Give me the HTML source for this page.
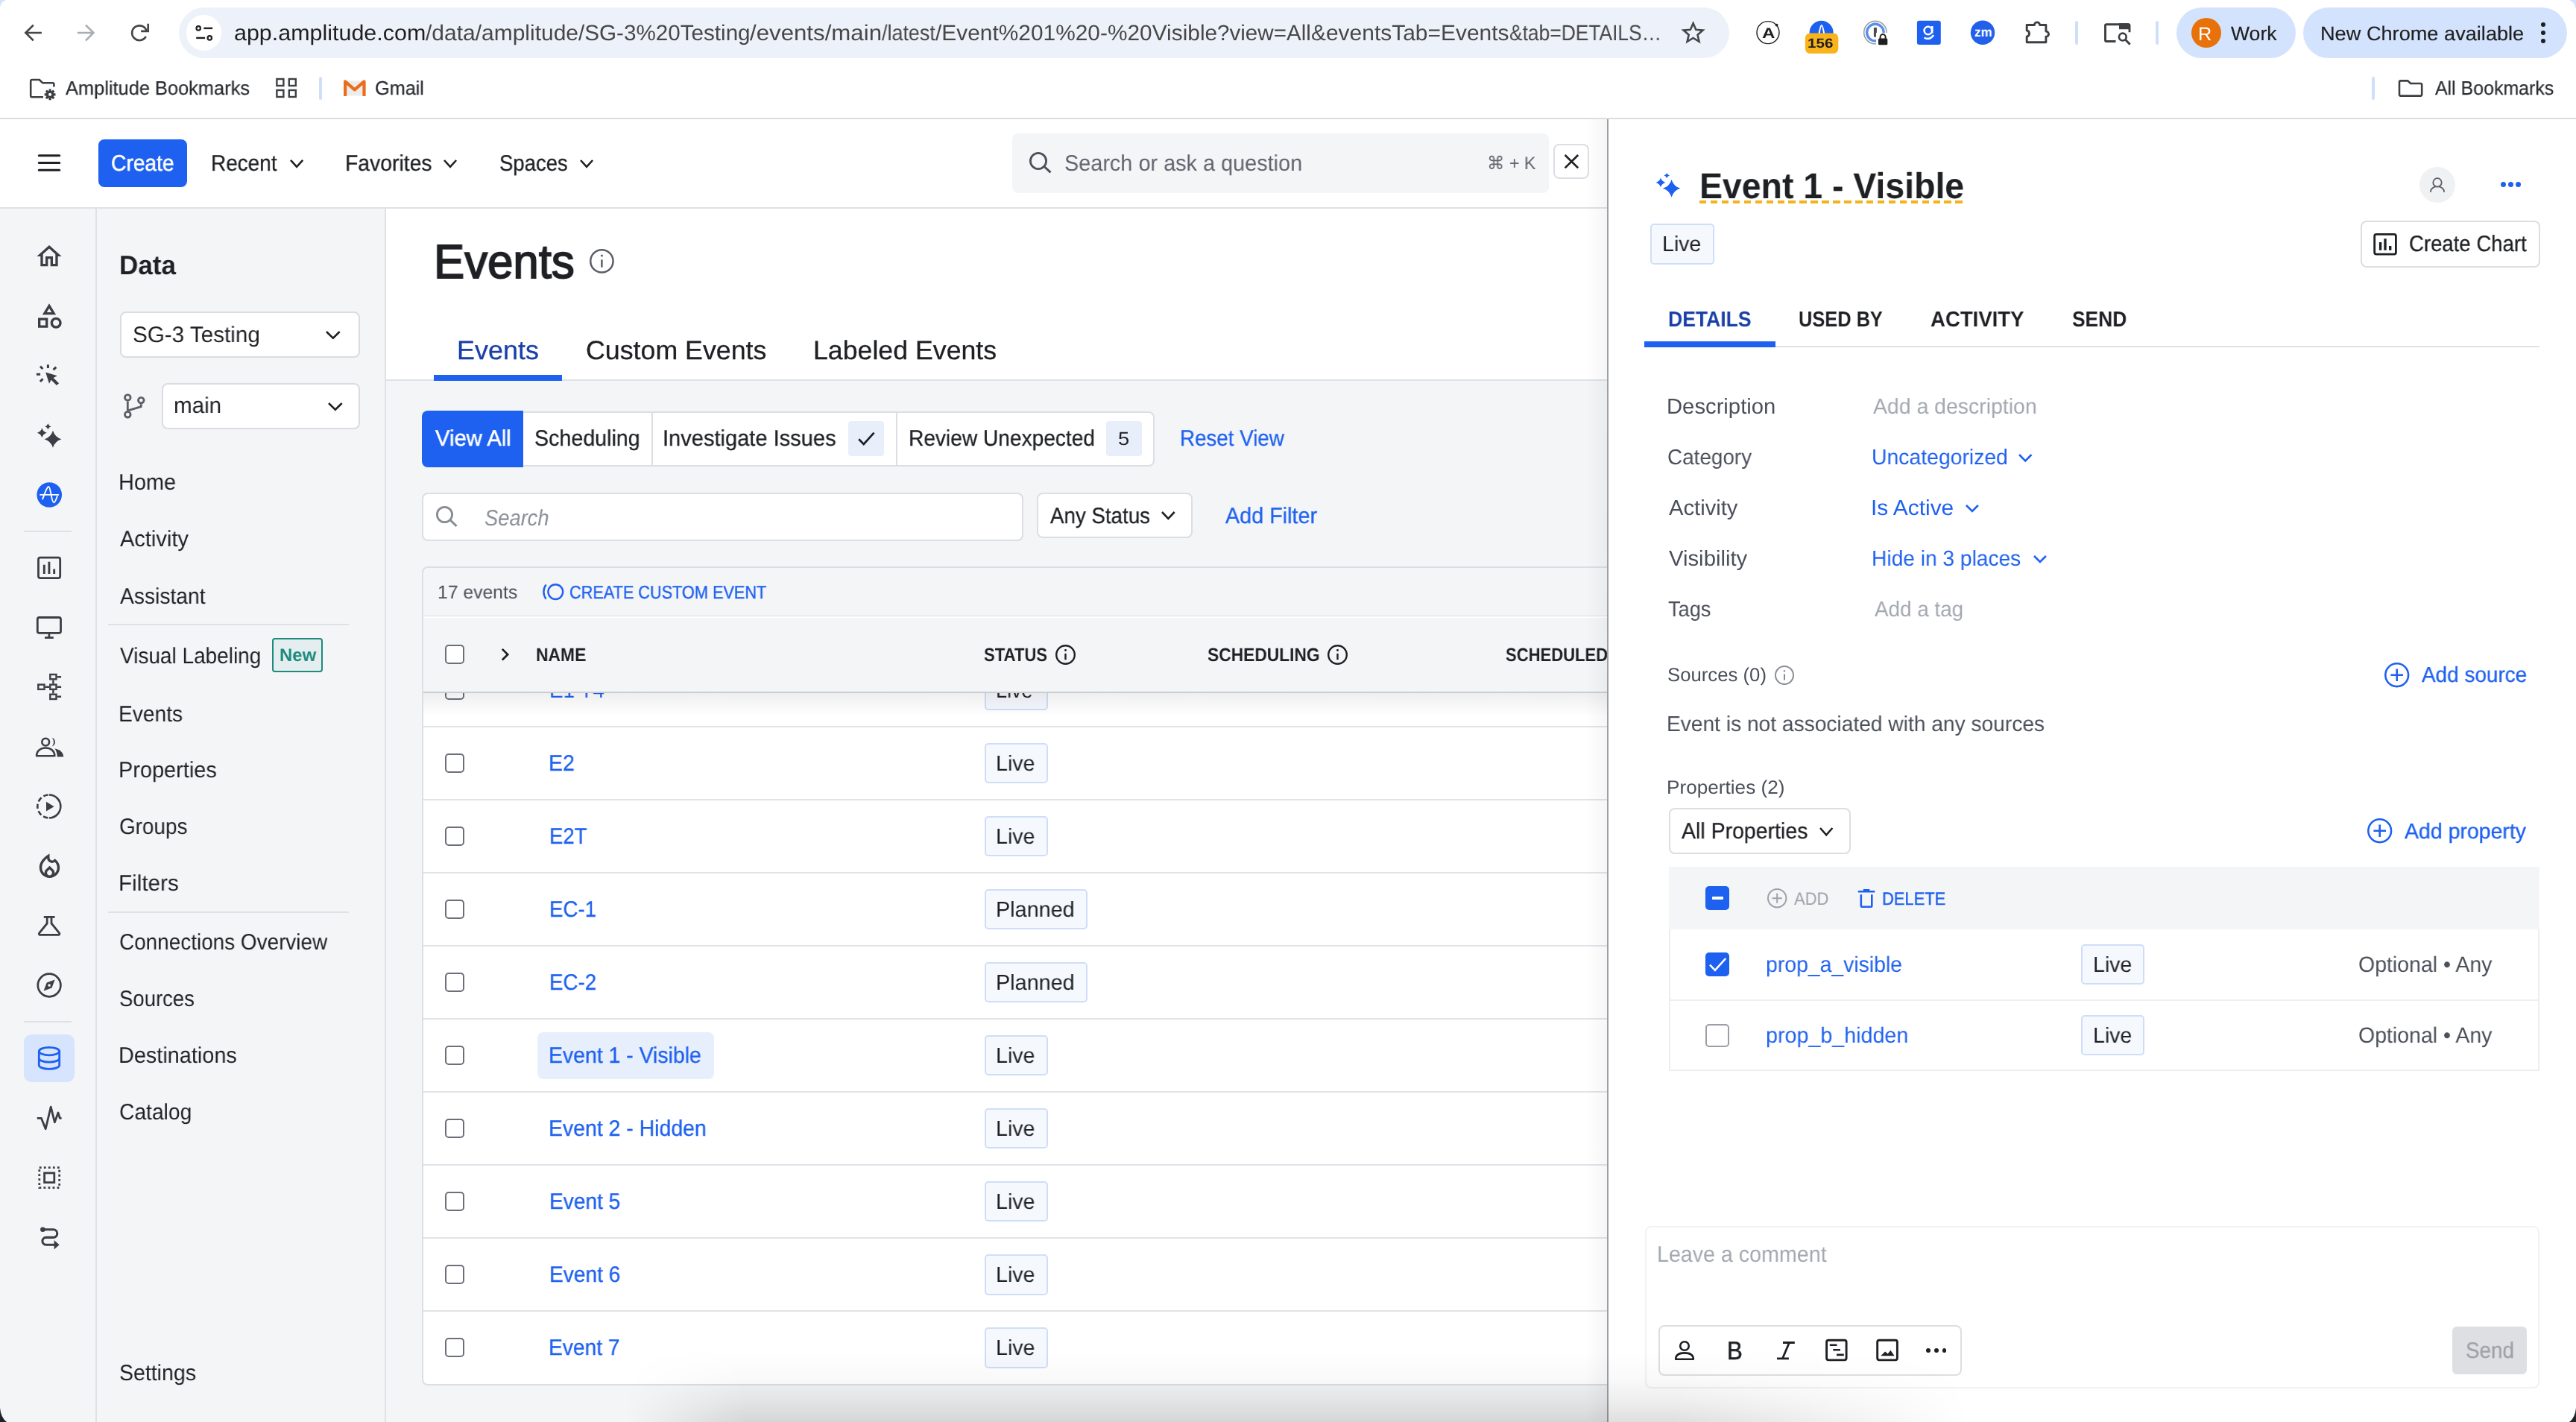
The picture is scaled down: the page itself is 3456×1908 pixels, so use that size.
<!DOCTYPE html>
<html lang="en"><head><meta charset="utf-8"><title>Event 1 - Visible</title>
<style>
html,body{margin:0;padding:0;}
body{width:3456px;height:1908px;position:relative;overflow:hidden;background:#fff;font-family:"Liberation Sans",sans-serif;text-rendering:geometricPrecision;-webkit-font-smoothing:antialiased;}
.b{position:absolute;box-sizing:border-box;display:block;}
.t{position:absolute;white-space:nowrap;transform-origin:0 0;display:block;will-change:transform;}
</style></head><body>
<div id="backgrounds">
<div class="b" style="left:0px;top:0px;width:3456px;height:158px;background:#ffffff;"></div>
<div class="b" style="left:0px;top:158px;width:3456px;height:2px;background:#dcdde1;"></div>
<div class="b" style="left:0px;top:160px;width:2156px;height:118px;background:#ffffff;"></div>
<div class="b" style="left:0px;top:278px;width:2156px;height:2px;background:#dfe1e6;"></div>
<div class="b" style="left:0px;top:280px;width:128px;height:1628px;background:#f4f5f7;"></div>
<div class="b" style="left:128px;top:280px;width:2px;height:1628px;background:#dfe1e6;"></div>
<div class="b" style="left:130px;top:280px;width:386px;height:1628px;background:#f4f5f7;"></div>
<div class="b" style="left:516px;top:280px;width:2px;height:1628px;background:#dfe1e6;"></div>
<div class="b" style="left:518px;top:280px;width:1638px;height:229px;background:#ffffff;"></div>
<div class="b" style="left:518px;top:509px;width:1638px;height:2px;background:#dfe1e6;"></div>
<div class="b" style="left:518px;top:511px;width:1638px;height:1397px;background:#f4f5f7;"></div>
</div><div id="browser-toolbar">
<div class="b" style="left:240px;top:10px;width:2080px;height:68px;background:#edf2fa;border-radius:34px;"></div>
<div class="b" style="left:249.8px;top:20px;width:47.6px;height:47.6px;background:#ffffff;border-radius:24px;"></div>
<span class="t" style="left:313.72px;top:28px;font-size:29.5px;line-height:33px;color:#1f1f1f;transform:scaleX(1.0321);">app.amplitude.com</span>
<span class="t" style="left:570.60px;top:28px;font-size:29.5px;line-height:33px;color:#474747;transform:scaleX(1.0163);">/data/amplitude</span>
<span class="t" style="left:775.60px;top:28px;font-size:29.5px;line-height:33px;color:#474747;transform:scaleX(1.0045);">/SG-3%20Testing</span>
<span class="t" style="left:1006.20px;top:28px;font-size:29.5px;line-height:33px;color:#474747;transform:scaleX(1.0583);">/events/main</span>
<span class="t" style="left:1183.20px;top:28px;font-size:29.5px;line-height:33px;color:#474747;transform:scaleX(0.9123);">/latest</span>
<span class="t" style="left:1255.00px;top:28px;font-size:29.5px;line-height:33px;color:#474747;transform:scaleX(1.0130);">/Event%201%20-%20Visible</span>
<span class="t" style="left:1633.20px;top:28px;font-size:29.5px;line-height:33px;color:#474747;transform:scaleX(1.0029);">?view=All</span>
<span class="t" style="left:1759.00px;top:28px;font-size:29.5px;line-height:33px;color:#474747;transform:scaleX(1.0150);">&amp;eventsTab=Events</span>
<span class="t" style="left:2024.50px;top:28px;font-size:29.5px;line-height:33px;color:#474747;transform:scaleX(0.8940);">&amp;tab=DETAILS…</span>
<div class="b" style="left:2920px;top:10px;width:160px;height:68px;background:#d3e3fd;border-radius:34px;"></div>
<div class="b" style="left:2939.5px;top:24px;width:40px;height:40px;background:#e8710a;border-radius:20px;"></div>
<span class="t" style="left:2949.43px;top:32px;font-size:25px;line-height:28px;color:#ffffff;transform:scaleX(1.0101);">R</span>
<span class="t" style="left:2992.89px;top:30px;font-size:26.5px;line-height:30px;color:#1f1f1f;-webkit-text-stroke:0.2px #1f1f1f;transform:scaleX(1.0034);">Work</span>
<div class="b" style="left:3090px;top:10px;width:354px;height:68px;background:#d3e3fd;border-radius:34px;"></div>
<span class="t" style="left:3113.17px;top:30px;font-size:26.5px;line-height:30px;color:#1f1f1f;-webkit-text-stroke:0.2px #1f1f1f;transform:scaleX(1.0249);">New Chrome available</span>
<div class="b" style="left:3409px;top:29.9px;width:6px;height:6px;background:#1f1f1f;border-radius:3px;"></div>
<div class="b" style="left:3409px;top:41.05px;width:6px;height:6px;background:#1f1f1f;border-radius:3px;"></div>
<div class="b" style="left:3409px;top:52.2px;width:6px;height:6px;background:#1f1f1f;border-radius:3px;"></div>
<div class="b" style="left:2783.6px;top:28px;width:4px;height:32px;background:#d0dff8;border-radius:2px;"></div>
<div class="b" style="left:2891.8px;top:28px;width:4px;height:32px;background:#d0dff8;border-radius:2px;"></div>
<span class="t" style="left:88.45px;top:103px;font-size:26px;line-height:30px;color:#2b2e33;-webkit-text-stroke:0.25px #2b2e33;transform:scaleX(0.9766);">Amplitude Bookmarks</span>
<div class="b" style="left:427.8px;top:102.5px;width:4px;height:31.5px;background:#d0dff8;border-radius:2px;"></div>
<span class="t" style="left:503.24px;top:103px;font-size:26px;line-height:30px;color:#2b2e33;-webkit-text-stroke:0.25px #2b2e33;transform:scaleX(0.9712);">Gmail</span>
<div class="b" style="left:3182px;top:102.5px;width:4px;height:31.5px;background:#d0dff8;border-radius:2px;"></div>
<span class="t" style="left:3266.95px;top:103px;font-size:26px;line-height:30px;color:#2b2e33;-webkit-text-stroke:0.25px #2b2e33;transform:scaleX(0.9578);">All Bookmarks</span>
</div><header id="app-header">
<div class="b" style="left:132px;top:187px;width:119px;height:64px;background:#1e61f0;border-radius:8px;"></div>
<span class="t" style="left:148.59px;top:203px;font-size:30px;line-height:33px;color:#ffffff;-webkit-text-stroke:0.5px #ffffff;transform:scaleX(0.9403);">Create</span>
<span class="t" style="left:283.31px;top:203px;font-size:30px;line-height:33px;color:#1e2024;-webkit-text-stroke:0.3px #1e2024;transform:scaleX(0.9318);">Recent</span>
<span class="t" style="left:463.08px;top:203px;font-size:30px;line-height:33px;color:#1e2024;-webkit-text-stroke:0.3px #1e2024;transform:scaleX(0.9448);">Favorites</span>
<span class="t" style="left:670.06px;top:203px;font-size:30px;line-height:33px;color:#1e2024;-webkit-text-stroke:0.3px #1e2024;transform:scaleX(0.9158);">Spaces</span>
<div class="b" style="left:1358.2px;top:179px;width:719.8px;height:80px;background:#f4f5f7;border-radius:8px;"></div>
<span class="t" style="left:1427.70px;top:203px;font-size:30px;line-height:33px;color:#5f636d;transform:scaleX(0.9617);">Search or ask a question</span>
<span class="t" style="left:1994.97px;top:206px;font-size:24px;line-height:27px;color:#5f636d;transform:scaleX(0.9727);">⌘ + K</span>
<div class="b" style="left:2084px;top:192.5px;width:47.5px;height:47.5px;background:#ffffff;border:2px solid #dcdee3;border-radius:8px;"></div>
</header><nav id="data-sidebar">
<span class="t" style="left:159.59px;top:335px;font-size:36px;line-height:41px;color:#1e2024;font-weight:700;transform:scaleX(0.9738);">Data</span>
<div class="b" style="left:161px;top:417.7px;width:322.3px;height:62.6px;background:#ffffff;border:2px solid #dadce1;border-radius:8px;"></div>
<span class="t" style="left:177.77px;top:433px;font-size:30px;line-height:33px;color:#1e2024;transform:scaleX(0.9883);">SG-3 Testing</span>
<div class="b" style="left:217.2px;top:513.7px;width:266.1px;height:62.2px;background:#ffffff;border:2px solid #dadce1;border-radius:8px;"></div>
<span class="t" style="left:233.05px;top:528px;font-size:30px;line-height:33px;color:#1e2024;transform:scaleX(0.9867);">main</span>
<span class="t" style="left:158.93px;top:631px;font-size:30px;line-height:33px;color:#1e2024;transform:scaleX(0.9642);">Home</span>
<span class="t" style="left:161.24px;top:707px;font-size:30px;line-height:33px;color:#1e2024;transform:scaleX(0.9674);">Activity</span>
<span class="t" style="left:161.24px;top:784px;font-size:30px;line-height:33px;color:#1e2024;transform:scaleX(0.9404);">Assistant</span>
<span class="t" style="left:161.19px;top:864px;font-size:30px;line-height:33px;color:#1e2024;transform:scaleX(0.9328);">Visual Labeling</span>
<span class="t" style="left:158.99px;top:942px;font-size:30px;line-height:33px;color:#1e2024;transform:scaleX(0.9380);">Events</span>
<span class="t" style="left:158.93px;top:1017px;font-size:30px;line-height:33px;color:#1e2024;transform:scaleX(0.9640);">Properties</span>
<span class="t" style="left:159.91px;top:1093px;font-size:30px;line-height:33px;color:#1e2024;transform:scaleX(0.9291);">Groups</span>
<span class="t" style="left:158.87px;top:1169px;font-size:30px;line-height:33px;color:#1e2024;transform:scaleX(0.9882);">Filters</span>
<span class="t" style="left:159.90px;top:1248px;font-size:30px;line-height:33px;color:#1e2024;transform:scaleX(0.9303);">Connections Overview</span>
<span class="t" style="left:160.06px;top:1324px;font-size:30px;line-height:33px;color:#1e2024;transform:scaleX(0.9172);">Sources</span>
<span class="t" style="left:158.93px;top:1400px;font-size:30px;line-height:33px;color:#1e2024;transform:scaleX(0.9619);">Destinations</span>
<span class="t" style="left:159.89px;top:1476px;font-size:30px;line-height:33px;color:#1e2024;transform:scaleX(0.9411);">Catalog</span>
<span class="t" style="left:160.02px;top:1826px;font-size:30px;line-height:33px;color:#1e2024;transform:scaleX(0.9504);">Settings</span>
<div class="b" style="left:144.5px;top:837px;width:323px;height:2px;background:#dfe1e6;"></div>
<div class="b" style="left:144.5px;top:1223px;width:323px;height:2px;background:#dfe1e6;"></div>
<div class="b" style="left:365.3px;top:855.7px;width:68.1px;height:46.6px;background:#e4eef0;border:2px solid #1d8a7c;border-radius:4px;"></div>
<span class="t" style="left:374.52px;top:866px;font-size:24px;line-height:27px;color:#1d8a7c;font-weight:700;transform:scaleX(0.9956);">New</span>
<div class="b" style="left:32px;top:712px;width:64px;height:2px;background:#dfe1e6;"></div>
<div class="b" style="left:32px;top:1370px;width:64px;height:2px;background:#dfe1e6;"></div>
<div class="b" style="left:32.1px;top:1387.8px;width:67.8px;height:64px;background:#d7e4fd;border-radius:10px;"></div>
</nav><main id="events-page">
<span class="t" style="left:581.94px;top:315px;font-size:64px;line-height:72px;color:#1e2024;-webkit-text-stroke:1.8px #1e2024;transform:scaleX(0.9644);">Events</span>
<span class="t" style="left:612.85px;top:450px;font-size:35.5px;line-height:40px;color:#1a40a8;-webkit-text-stroke:0.3px #1a40a8;transform:scaleX(1.0121);">Events</span>
<span class="t" style="left:785.91px;top:450px;font-size:35.5px;line-height:40px;color:#1e2024;-webkit-text-stroke:0.3px #1e2024;transform:scaleX(1.0070);">Custom Events</span>
<span class="t" style="left:1090.97px;top:450px;font-size:35.5px;line-height:40px;color:#1e2024;-webkit-text-stroke:0.3px #1e2024;transform:scaleX(1.0056);">Labeled Events</span>
<div class="b" style="left:582px;top:502.6px;width:172px;height:8px;background:#1e61f0;"></div>
<div class="b" style="left:566px;top:552px;width:983px;height:74px;background:#ffffff;border:2px solid #dcdee3;border-radius:8px;"></div>
<div class="b" style="left:566px;top:551.2px;width:135.8px;height:75.4px;background:#1e61f0;border-radius:8px 0 0 8px;"></div>
<span class="t" style="left:584.18px;top:572px;font-size:30px;line-height:33px;color:#ffffff;-webkit-text-stroke:0.5px #ffffff;transform:scaleX(0.9737);">View All</span>
<span class="t" style="left:717.41px;top:572px;font-size:30px;line-height:33px;color:#1e2024;-webkit-text-stroke:0.3px #1e2024;transform:scaleX(0.9541);">Scheduling</span>
<div class="b" style="left:874px;top:553px;width:2px;height:72px;background:#dcdee3;"></div>
<span class="t" style="left:889.33px;top:572px;font-size:30px;line-height:33px;color:#1e2024;-webkit-text-stroke:0.3px #1e2024;transform:scaleX(0.9683);">Investigate Issues</span>
<div class="b" style="left:1138.2px;top:564.8px;width:47.6px;height:47.5px;background:#e8effb;border-radius:4px;"></div>
<div class="b" style="left:1202px;top:553px;width:2px;height:72px;background:#dcdee3;"></div>
<span class="t" style="left:1218.69px;top:572px;font-size:30px;line-height:33px;color:#1e2024;-webkit-text-stroke:0.3px #1e2024;transform:scaleX(0.9371);">Review Unexpected</span>
<div class="b" style="left:1484.2px;top:564.8px;width:47.6px;height:47.5px;background:#e8effb;border-radius:4px;"></div>
<span class="t" style="left:1500.41px;top:575px;font-size:25px;line-height:28px;color:#1e2024;transform:scaleX(1.0947);">5</span>
<span class="t" style="left:1582.53px;top:572px;font-size:30px;line-height:33px;color:#1e61f0;-webkit-text-stroke:0.3px #1e61f0;transform:scaleX(0.9247);">Reset View</span>
<div class="b" style="left:566px;top:661.3px;width:807.2px;height:65px;background:#ffffff;border:2px solid #dcdee3;border-radius:8px;"></div>
<span class="t" style="left:649.73px;top:679px;font-size:30px;line-height:33px;color:#8a8e98;font-style:italic;transform:scaleX(0.9111);">Search</span>
<div class="b" style="left:1391px;top:661.3px;width:209px;height:61.2px;background:#ffffff;border:2px solid #dcdee3;border-radius:8px;"></div>
<span class="t" style="left:1408.74px;top:676px;font-size:30px;line-height:33px;color:#1e2024;-webkit-text-stroke:0.3px #1e2024;transform:scaleX(0.9240);">Any Status</span>
<span class="t" style="left:1643.64px;top:676px;font-size:30px;line-height:33px;color:#1e61f0;-webkit-text-stroke:0.3px #1e61f0;transform:scaleX(0.9583);">Add Filter</span>
<div class="b" style="left:566px;top:760.4px;width:1600px;height:68px;background:#f4f5f7;border:2px solid #dcdee3;border-radius:8px 0 0 0;"></div>
<span class="t" style="left:586.52px;top:781px;font-size:25px;line-height:28px;color:#4b4f5a;transform:scaleX(0.9886);">17 events</span>
<span class="t" style="left:763.92px;top:782px;font-size:24.5px;line-height:27px;color:#1e61f0;-webkit-text-stroke:0.4px #1e61f0;transform:scaleX(0.8851);">CREATE CUSTOM EVENT</span>
<div class="b" style="left:566px;top:826.7px;width:1600px;height:1032.5px;background:#ffffff;border:2px solid #dcdee3;border-radius:0 0 0 8px;border-top:none;"></div>
<div class="b" style="left:568px;top:828.7px;width:1590px;height:99.3px;background:#f4f5f7;"></div>
<span class="t" style="left:719.29px;top:865px;font-size:25px;line-height:28px;color:#1e2024;font-weight:700;transform:scaleX(0.9144);">NAME</span>
<span class="t" style="left:1319.88px;top:865px;font-size:25px;line-height:28px;color:#1e2024;font-weight:700;transform:scaleX(0.8845);">STATUS</span>
<span class="t" style="left:1619.86px;top:865px;font-size:25px;line-height:28px;color:#1e2024;font-weight:700;transform:scaleX(0.9114);">SCHEDULING</span>
<span class="t" style="left:2019.58px;top:865px;font-size:25px;line-height:28px;color:#1e2024;font-weight:700;transform:scaleX(0.8814);">SCHEDULED</span>
<div class="b" style="left:597px;top:865.3px;width:26px;height:26px;background:#ffffff;border:2px solid #6b6f78;border-radius:5px;"></div>
<div class="b" style="left:568px;top:930px;width:1588px;height:44px;overflow:hidden;">
<div class="b" style="left:29px;top:-17.4px;width:26px;height:26px;background:#fff;border:2px solid #6b6f78;border-radius:5px;"></div>
<span class="t" style="left:168.6px;top:-20px;font-size:30px;line-height:33px;color:#1e61f0;transform:scaleX(0.93);">E1 T4</span>
<div class="b" style="left:752.6px;top:-31.6px;width:85px;height:54.4px;background:#f5f9fe;border:2px solid #cfdef8;border-radius:5px;"></div>
<span class="t" style="left:768.2px;top:-19px;font-size:29px;line-height:32px;color:#1e2024;transform:scaleX(0.93);">Live</span>
</div>
<div class="b" style="left:568px;top:973.6px;width:1588px;height:2px;background:#e1e3e8;"></div>
<div class="b" style="left:597px;top:1011.12px;width:26px;height:26px;background:#ffffff;border:2px solid #6b6f78;border-radius:5px;"></div>
<span class="t" style="left:736.46px;top:1008px;font-size:30px;line-height:33px;color:#1e61f0;-webkit-text-stroke:0.3px #1e61f0;transform:scaleX(0.9502);">E2</span>
<div class="b" style="left:1320.6px;top:996.915px;width:85px;height:54.4px;background:#f5f9fe;border:2px solid #cfdef8;border-radius:5px;"></div>
<span class="t" style="left:1336.05px;top:1009px;font-size:29px;line-height:32px;color:#1e2024;transform:scaleX(0.9872);">Live</span>
<div class="b" style="left:568px;top:1071.63px;width:1588px;height:2px;background:#e1e3e8;"></div>
<div class="b" style="left:597px;top:1109.15px;width:26px;height:26px;background:#ffffff;border:2px solid #6b6f78;border-radius:5px;"></div>
<span class="t" style="left:736.54px;top:1106px;font-size:30px;line-height:33px;color:#1e61f0;-webkit-text-stroke:0.3px #1e61f0;transform:scaleX(0.9177);">E2T</span>
<div class="b" style="left:1320.6px;top:1094.95px;width:85px;height:54.4px;background:#f5f9fe;border:2px solid #cfdef8;border-radius:5px;"></div>
<span class="t" style="left:1336.05px;top:1107px;font-size:29px;line-height:32px;color:#1e2024;transform:scaleX(0.9872);">Live</span>
<div class="b" style="left:568px;top:1169.66px;width:1588px;height:2px;background:#e1e3e8;"></div>
<div class="b" style="left:597px;top:1207.18px;width:26px;height:26px;background:#ffffff;border:2px solid #6b6f78;border-radius:5px;"></div>
<span class="t" style="left:736.53px;top:1204px;font-size:30px;line-height:33px;color:#1e61f0;-webkit-text-stroke:0.3px #1e61f0;transform:scaleX(0.9218);">EC-1</span>
<div class="b" style="left:1320.6px;top:1192.98px;width:138px;height:54.4px;background:#f5f9fe;border:2px solid #cfdef8;border-radius:5px;"></div>
<span class="t" style="left:1336.04px;top:1205px;font-size:29px;line-height:32px;color:#1e2024;transform:scaleX(0.9932);">Planned</span>
<div class="b" style="left:568px;top:1267.69px;width:1588px;height:2px;background:#e1e3e8;"></div>
<div class="b" style="left:597px;top:1305.21px;width:26px;height:26px;background:#ffffff;border:2px solid #6b6f78;border-radius:5px;"></div>
<span class="t" style="left:736.53px;top:1302px;font-size:30px;line-height:33px;color:#1e61f0;-webkit-text-stroke:0.3px #1e61f0;transform:scaleX(0.9226);">EC-2</span>
<div class="b" style="left:1320.6px;top:1291.01px;width:138px;height:54.4px;background:#f5f9fe;border:2px solid #cfdef8;border-radius:5px;"></div>
<span class="t" style="left:1336.04px;top:1303px;font-size:29px;line-height:32px;color:#1e2024;transform:scaleX(0.9932);">Planned</span>
<div class="b" style="left:568px;top:1365.72px;width:1588px;height:2px;background:#e1e3e8;"></div>
<div class="b" style="left:597px;top:1403.24px;width:26px;height:26px;background:#ffffff;border:2px solid #6b6f78;border-radius:5px;"></div>
<div class="b" style="left:720.5px;top:1384.94px;width:237.8px;height:62.7px;background:#e8effc;border-radius:8px;"></div>
<span class="t" style="left:736.47px;top:1400px;font-size:30px;line-height:33px;color:#1e61f0;-webkit-text-stroke:0.3px #1e61f0;transform:scaleX(0.9471);">Event 1 - Visible</span>
<div class="b" style="left:1320.6px;top:1389.04px;width:85px;height:54.4px;background:#f5f9fe;border:2px solid #cfdef8;border-radius:5px;"></div>
<span class="t" style="left:1336.05px;top:1401px;font-size:29px;line-height:32px;color:#1e2024;transform:scaleX(0.9872);">Live</span>
<div class="b" style="left:568px;top:1463.75px;width:1588px;height:2px;background:#e1e3e8;"></div>
<div class="b" style="left:597px;top:1501.27px;width:26px;height:26px;background:#ffffff;border:2px solid #6b6f78;border-radius:5px;"></div>
<span class="t" style="left:736.47px;top:1498px;font-size:30px;line-height:33px;color:#1e61f0;-webkit-text-stroke:0.3px #1e61f0;transform:scaleX(0.9476);">Event 2 - Hidden</span>
<div class="b" style="left:1320.6px;top:1487.07px;width:85px;height:54.4px;background:#f5f9fe;border:2px solid #cfdef8;border-radius:5px;"></div>
<span class="t" style="left:1336.05px;top:1499px;font-size:29px;line-height:32px;color:#1e2024;transform:scaleX(0.9872);">Live</span>
<div class="b" style="left:568px;top:1561.78px;width:1588px;height:2px;background:#e1e3e8;"></div>
<div class="b" style="left:597px;top:1599.3px;width:26px;height:26px;background:#ffffff;border:2px solid #6b6f78;border-radius:5px;"></div>
<span class="t" style="left:736.50px;top:1596px;font-size:30px;line-height:33px;color:#1e61f0;-webkit-text-stroke:0.3px #1e61f0;transform:scaleX(0.9364);">Event 5</span>
<div class="b" style="left:1320.6px;top:1585.1px;width:85px;height:54.4px;background:#f5f9fe;border:2px solid #cfdef8;border-radius:5px;"></div>
<span class="t" style="left:1336.05px;top:1597px;font-size:29px;line-height:32px;color:#1e2024;transform:scaleX(0.9872);">Live</span>
<div class="b" style="left:568px;top:1659.81px;width:1588px;height:2px;background:#e1e3e8;"></div>
<div class="b" style="left:597px;top:1697.33px;width:26px;height:26px;background:#ffffff;border:2px solid #6b6f78;border-radius:5px;"></div>
<span class="t" style="left:736.50px;top:1694px;font-size:30px;line-height:33px;color:#1e61f0;-webkit-text-stroke:0.3px #1e61f0;transform:scaleX(0.9369);">Event 6</span>
<div class="b" style="left:1320.6px;top:1683.12px;width:85px;height:54.4px;background:#f5f9fe;border:2px solid #cfdef8;border-radius:5px;"></div>
<span class="t" style="left:1336.05px;top:1695px;font-size:29px;line-height:32px;color:#1e2024;transform:scaleX(0.9872);">Live</span>
<div class="b" style="left:568px;top:1757.84px;width:1588px;height:2px;background:#e1e3e8;"></div>
<div class="b" style="left:597px;top:1795.36px;width:26px;height:26px;background:#ffffff;border:2px solid #6b6f78;border-radius:5px;"></div>
<span class="t" style="left:736.49px;top:1792px;font-size:30px;line-height:33px;color:#1e61f0;-webkit-text-stroke:0.3px #1e61f0;transform:scaleX(0.9389);">Event 7</span>
<div class="b" style="left:1320.6px;top:1781.16px;width:85px;height:54.4px;background:#f5f9fe;border:2px solid #cfdef8;border-radius:5px;"></div>
<span class="t" style="left:1336.05px;top:1793px;font-size:29px;line-height:32px;color:#1e2024;transform:scaleX(0.9872);">Live</span>
<div class="b" style="left:568px;top:927.5px;width:1588px;height:2.5px;background:#c9ccd2;"></div>
<div class="b" style="left:568px;top:930px;width:1588px;height:32px;background:linear-gradient(to bottom,rgba(30,32,36,0.07),rgba(30,32,36,0));"></div>
</main><aside id="event-details">
<div class="b" style="left:2128px;top:160px;width:28px;height:1748px;background:linear-gradient(to right,rgba(30,32,36,0),rgba(30,32,36,0.045));"></div>
<div class="b" style="left:2156px;top:160px;width:1300px;height:1748px;background:#ffffff;"></div>
<div class="b" style="left:2156px;top:160px;width:2.2px;height:1748px;background:#9c9fa6;"></div>
<span class="t" style="left:2279.94px;top:223px;font-size:48.5px;line-height:54px;color:#1e2024;font-weight:700;transform:scaleX(0.9571);">Event 1 - Visible</span>
<div class="b" style="left:2280.3px;top:269.2px;width:353.7px;height:4.2px;background:repeating-linear-gradient(to right,#f5b31b 0 9.5px,transparent 9.5px 14.93px);"></div>
<div class="b" style="left:3246px;top:224px;width:48px;height:48px;background:#f0f1f3;border-radius:24px;"></div>
<div class="b" style="left:3354.6px;top:244.2px;width:7.2px;height:7.2px;background:#1e61f0;border-radius:4px;"></div>
<div class="b" style="left:3364.8px;top:244.2px;width:7.2px;height:7.2px;background:#1e61f0;border-radius:4px;"></div>
<div class="b" style="left:3375px;top:244.2px;width:7.2px;height:7.2px;background:#1e61f0;border-radius:4px;"></div>
<div class="b" style="left:2214.4px;top:300.4px;width:85.2px;height:54.7px;background:#f5f9fe;border:2px solid #cfdef8;border-radius:5px;"></div>
<span class="t" style="left:2230.26px;top:312px;font-size:29px;line-height:32px;color:#1e2024;transform:scaleX(0.9832);">Live</span>
<div class="b" style="left:3166.5px;top:296.3px;width:241px;height:63px;background:#ffffff;border:2px solid #dcdee2;border-radius:8px;"></div>
<span class="t" style="left:3231.62px;top:311px;font-size:30px;line-height:33px;color:#1e2024;-webkit-text-stroke:0.3px #1e2024;transform:scaleX(0.9180);">Create Chart</span>
<div class="b" style="left:2205.8px;top:464px;width:1201.6px;height:2px;background:#dfe1e6;"></div>
<div class="b" style="left:2205.8px;top:457.6px;width:176.4px;height:8px;background:#1e61f0;"></div>
<span class="t" style="left:2237.65px;top:413px;font-size:29px;line-height:32px;color:#1a40a8;font-weight:700;transform:scaleX(0.9153);">DETAILS</span>
<span class="t" style="left:2412.88px;top:413px;font-size:29px;line-height:32px;color:#1e2024;font-weight:700;transform:scaleX(0.8753);">USED BY</span>
<span class="t" style="left:2590.34px;top:413px;font-size:29px;line-height:32px;color:#1e2024;font-weight:700;transform:scaleX(0.9499);">ACTIVITY</span>
<span class="t" style="left:2779.86px;top:413px;font-size:29px;line-height:32px;color:#1e2024;font-weight:700;transform:scaleX(0.9076);">SEND</span>
<span class="t" style="left:2236.30px;top:530px;font-size:29px;line-height:32px;color:#4b4f5a;transform:scaleX(1.0084);">Description</span>
<span class="t" style="left:2237.31px;top:598px;font-size:29px;line-height:32px;color:#4b4f5a;transform:scaleX(0.9606);">Category</span>
<span class="t" style="left:2238.64px;top:666px;font-size:29px;line-height:32px;color:#4b4f5a;transform:scaleX(1.0062);">Activity</span>
<span class="t" style="left:2238.58px;top:734px;font-size:29px;line-height:32px;color:#4b4f5a;transform:scaleX(1.0091);">Visibility</span>
<span class="t" style="left:2238.10px;top:802px;font-size:29px;line-height:32px;color:#4b4f5a;transform:scaleX(0.9368);">Tags</span>
<span class="t" style="left:2512.54px;top:530px;font-size:29px;line-height:32px;color:#a3a7b0;transform:scaleX(0.9803);">Add a description</span>
<span class="t" style="left:2511.02px;top:598px;font-size:29px;line-height:32px;color:#1e61f0;transform:scaleX(0.9781);">Uncategorized</span>
<span class="t" style="left:2510.45px;top:666px;font-size:29px;line-height:32px;color:#1e61f0;transform:scaleX(1.0296);">Is Active</span>
<span class="t" style="left:2510.89px;top:734px;font-size:29px;line-height:32px;color:#1e61f0;transform:scaleX(0.9704);">Hide in 3 places</span>
<span class="t" style="left:2514.64px;top:802px;font-size:29px;line-height:32px;color:#a3a7b0;transform:scaleX(0.9596);">Add a tag</span>
<span class="t" style="left:2237.44px;top:892px;font-size:25.5px;line-height:28px;color:#4b4f5a;transform:scaleX(1.0089);">Sources (0)</span>
<span class="t" style="left:3249.04px;top:890px;font-size:29px;line-height:32px;color:#1e61f0;-webkit-text-stroke:0.3px #1e61f0;transform:scaleX(0.9625);">Add source</span>
<span class="t" style="left:2236.29px;top:956px;font-size:29px;line-height:32px;color:#4b4f5a;transform:scaleX(0.9708);">Event is not associated with any sources</span>
<span class="t" style="left:2236.46px;top:1043px;font-size:25.5px;line-height:28px;color:#4b4f5a;transform:scaleX(1.0258);">Properties (2)</span>
<div class="b" style="left:2238.7px;top:1083.7px;width:244.4px;height:62.4px;background:#ffffff;border:2px solid #dcdee2;border-radius:8px;"></div>
<span class="t" style="left:2256.44px;top:1099px;font-size:30px;line-height:33px;color:#1e2024;-webkit-text-stroke:0.3px #1e2024;transform:scaleX(0.9494);">All Properties</span>
<span class="t" style="left:3226.04px;top:1100px;font-size:29px;line-height:32px;color:#1e61f0;-webkit-text-stroke:0.3px #1e61f0;transform:scaleX(0.9817);">Add property</span>
<div class="b" style="left:2238.7px;top:1163.3px;width:1168.7px;height:273.3px;background:#ffffff;border:2px solid #eceef1;"></div>
<div class="b" style="left:2238.7px;top:1163.3px;width:1168.7px;height:83.7px;background:#f4f5f7;"></div>
<div class="b" style="left:2288px;top:1188.7px;width:32.4px;height:32.4px;background:#1e61f0;border-radius:5px;"></div>
<div class="b" style="left:2296.5px;top:1203.4px;width:15.4px;height:3.2px;background:#ffffff;border-radius:1px;"></div>
<span class="t" style="left:2406.96px;top:1193px;font-size:24px;line-height:27px;color:#9ea2ab;transform:scaleX(0.9174);">ADD</span>
<span class="t" style="left:2524.60px;top:1193px;font-size:24px;line-height:27px;color:#1e61f0;-webkit-text-stroke:0.4px #1e61f0;transform:scaleX(0.9139);">DELETE</span>
<div class="b" style="left:2240.7px;top:1340.8px;width:1164.7px;height:2px;background:#eceef1;"></div>
<div class="b" style="left:2288px;top:1277.9px;width:32.4px;height:32.4px;background:#1e61f0;border-radius:5px;"></div>
<div class="b" style="left:2288.2px;top:1373.5px;width:31.6px;height:31.4px;background:#ffffff;border:2px solid #9a9ea7;border-radius:5px;"></div>
<span class="t" style="left:2368.68px;top:1278px;font-size:29.5px;line-height:33px;color:#1e61f0;transform:scaleX(0.9623);">prop_a_visible</span>
<span class="t" style="left:2368.67px;top:1373px;font-size:29.5px;line-height:33px;color:#1e61f0;transform:scaleX(0.9716);">prop_b_hidden</span>
<div class="b" style="left:2792.4px;top:1266.8px;width:85.1px;height:54.7px;background:#f5f9fe;border:2px solid #cfdef8;border-radius:5px;"></div>
<span class="t" style="left:2807.86px;top:1279px;font-size:29px;line-height:32px;color:#1e2024;transform:scaleX(0.9832);">Live</span>
<div class="b" style="left:2792.4px;top:1361.6px;width:85.1px;height:54.7px;background:#f5f9fe;border:2px solid #cfdef8;border-radius:5px;"></div>
<span class="t" style="left:2807.86px;top:1374px;font-size:29px;line-height:32px;color:#1e2024;transform:scaleX(0.9832);">Live</span>
<span class="t" style="left:3164.16px;top:1278px;font-size:29.5px;line-height:33px;color:#4b4f5a;transform:scaleX(0.9656);">Optional • Any</span>
<span class="t" style="left:3164.16px;top:1373px;font-size:29.5px;line-height:33px;color:#4b4f5a;transform:scaleX(0.9656);">Optional • Any</span>
<div class="b" style="left:2206.8px;top:1645px;width:1200.6px;height:218px;background:#ffffff;border:2px solid #f1f2f4;border-radius:8px;"></div>
<span class="t" style="left:2222.65px;top:1667px;font-size:30px;line-height:33px;color:#a3a7b0;transform:scaleX(0.9546);">Leave a comment</span>
<div class="b" style="left:2224.5px;top:1778.3px;width:407.2px;height:67.5px;background:#ffffff;border:2px solid #dcdee2;border-radius:8px;"></div>
<div class="b" style="left:3290.2px;top:1780.4px;width:99.9px;height:63.3px;background:#dddfe3;border-radius:6px;"></div>
<span class="t" style="left:3307.75px;top:1796px;font-size:30px;line-height:33px;color:#9ea2ab;-webkit-text-stroke:0.3px #9ea2ab;transform:scaleX(0.9254);">Send</span>
</aside><div id="window-effects">
<div class="b" style="left:840px;top:1812px;width:1800px;height:96px;background:linear-gradient(to bottom,rgba(0,0,0,0) 0%,rgba(0,0,0,0.025) 40%,rgba(0,0,0,0.065) 70%,rgba(0,0,0,0.125) 100%);-webkit-mask-image:linear-gradient(to right,transparent 0%,#000 9%,#000 78%,transparent 100%);mask-image:linear-gradient(to right,transparent 0%,#000 9%,#000 78%,transparent 100%);"></div>
<svg class="b" style="left:0;top:0" width="3456" height="1908" viewBox="0 0 3456 1908"><path d="M0 1889Q1 1902 9 1908H0Z" fill="#1d212a"/><path d="M3456 1889Q3455 1902 3447 1908H3456Z" fill="#1d212a"/><path d="M0 0H8.500Q1 2 0 10.500Z" fill="#d3e3fd"/><path d="M3456 0H3447Q3455 3 3456 13Z" fill="#d3e3fd"/></svg>
</div>
<div id="icons">
<svg class="b" style="left:28px;top:28px;overflow:visible;" width="180" height="34" viewBox="28 28 180 34"><path d="M55.9 44H34.6M44.8 33.6L34.4 44l10.4 10.4" fill="none" stroke="#444746" stroke-width="2.7" /><path d="M103.9 44h21.3M115 33.6L125.4 44 115 54.4" fill="none" stroke="#a9acb1" stroke-width="2.7" /><path d="M195.700 49A9.900 9.900 0 1 1 196.600 41.700" fill="none" stroke="#444746" stroke-width="2.7" /><path d="M198.700 31.800v10h-9.600" fill="none" stroke="#444746" stroke-width="2.7" /></svg>
<svg class="b" style="left:251px;top:21px;overflow:visible;" width="47" height="47" viewBox="251 21 47 47"><circle cx="266.2" cy="37.9" r="2.7" fill="none" stroke="#1f1f1f" stroke-width="2.2" /><path d="M273.3 37.9h11.9" fill="none" stroke="#1f1f1f" stroke-width="2.4" /><circle cx="281.3" cy="50.9" r="2.7" fill="none" stroke="#1f1f1f" stroke-width="2.2" /><path d="M263.2 50.9h11.9" fill="none" stroke="#1f1f1f" stroke-width="2.4" /></svg>
<svg class="b" style="left:2254px;top:27px;overflow:visible;" width="36" height="34" viewBox="2254 27 36 34"><path d="M2271.6 31.2l3.7 8.6 9.3 0.8-7.1 6.1 2.1 9.1-8-4.8-8 4.8 2.1-9.1-7.1-6.1 9.3-0.8z" fill="none" stroke="#444746" stroke-width="2.6" stroke-linejoin="miter"/></svg>
<svg class="b" style="left:2355px;top:27px;overflow:visible;" width="34" height="34" viewBox="2355 27 34 34"><circle cx="2372" cy="43.6" r="15" fill="none" stroke="#1f1f1f" stroke-width="1.4" /><circle cx="2383.6" cy="33.6" r="1.9" fill="#1f1f1f"/></svg>
<span class="t" style="left:2363.82px;top:34px;font-size:19.5px;line-height:22px;color:#1f1f1f;font-weight:700;transform:scaleX(1.2363);">A</span>
<svg class="b" style="left:2421px;top:27px;overflow:visible;" width="46" height="46" viewBox="2421 27 46 46"><circle cx="2443.6" cy="43.7" r="16" fill="#1e61f0"/><path d="M2440.6 45c1-6 2-11 3.2-11s2.3 5 3.4 11" fill="none" stroke="#ffffff" stroke-width="2" /><rect x="2421.9" y="44.4" width="44.4" height="27.4" rx="6.5" fill="#f9b31b"/></svg>
<span class="t" style="left:2425.42px;top:48px;font-size:17.8px;line-height:20px;color:#1f1f1f;font-weight:700;transform:scaleX(1.1586);">156</span>
<svg class="b" style="left:2499px;top:27px;overflow:visible;" width="36" height="36" viewBox="2499 27 36 36"><circle cx="2515.9" cy="43.6" r="15.2" fill="none" stroke="#9aa0a6" stroke-width="1.6" /><circle cx="2515.9" cy="43.6" r="11.3" fill="none" stroke="#5b8def" stroke-width="3.4" /><circle cx="2515.9" cy="43.6" r="9" fill="#ffffff"/><rect x="2513.9" y="37" width="4" height="12.6" fill="#4a4d52"/><rect x="2517" y="44" width="17" height="17" fill="#ffffff"/><rect x="2520" y="51.6" width="12.3" height="8.6" rx="1.5" fill="#1f1f1f"/><path d="M2522.6 52v-2.4a3.5 3.5 0 0 1 7 0V52" fill="none" stroke="#1f1f1f" stroke-width="2" /></svg>
<svg class="b" style="left:2571px;top:27px;overflow:visible;" width="34" height="34" viewBox="2571 27 34 34"><rect x="2571.9" y="27.7" width="31.9" height="32.2" rx="3" fill="#1e61f0"/><circle cx="2586.8" cy="41" r="5.2" fill="none" stroke="#ffffff" stroke-width="2.6" /><path d="M2592.2 35v9.5M2581.5 50.5c4 2.4 9.5 2 12.5-3.5" fill="none" stroke="#ffffff" stroke-width="2.6" /></svg>
<svg class="b" style="left:2643px;top:27px;overflow:visible;" width="34" height="34" viewBox="2643 27 34 34"><circle cx="2660" cy="43.8" r="16.2" fill="#2360ea"/></svg>
<span class="t" style="left:2648.72px;top:33px;font-size:17.5px;line-height:20px;color:#ffffff;font-weight:700;transform:scaleX(0.9760);">zm</span>
<svg class="b" style="left:2716px;top:25px;overflow:visible;" width="36" height="36" viewBox="2716 25 36 36"><path d="M2719.2 33.5h10.2a3.6 3.6 0 0 1 7.2 0h8.3v8.6a3.6 3.6 0 0 1 0 7.2v7.4h-25.7v-7.6a4.2 4.2 0 0 0 0-8.2z" fill="none" stroke="#3c4043" stroke-width="2.9" stroke-linejoin="round"/></svg>
<svg class="b" style="left:2822px;top:30px;overflow:visible;" width="38" height="32" viewBox="2822 30 38 32"><path d="M2838.5 55.5h-12.4a1.6 1.6 0 0 1-1.6-1.6V34.3a1.6 1.6 0 0 1 1.6-1.6h29.3a1.6 1.6 0 0 1 1.6 1.6v9" fill="none" stroke="#3c4043" stroke-width="2.9" /><path d="M2843 31.3h12.4a1.6 1.6 0 0 1 1.6 1.6v6.3h-14z" fill="#3c4043"/><circle cx="2847.8" cy="49.6" r="4.9" fill="none" stroke="#3c4043" stroke-width="2.7" /><path d="M2851.4 53.3l6.3 6.3" fill="none" stroke="#3c4043" stroke-width="2.9" /></svg>
<svg class="b" style="left:39px;top:104px;overflow:visible;" width="38" height="32" viewBox="39 104 38 32"><path d="M58 130.3H43a1.8 1.8 0 0 1-1.8-1.8V108.8A1.8 1.8 0 0 1 43 107h9.8l4.2 4.2h13.6a1.8 1.8 0 0 1 1.8 1.8v3.5" fill="none" stroke="#3c4043" stroke-width="2.6" stroke-linejoin="round"/><circle cx="67.100" cy="126.800" r="3.700" fill="none" stroke="#3c4043" stroke-width="3.2" /><path d="M67.100 119.400v3M67.100 131.200v3M59.700 126.800h3M71.500 126.800h3M61.900 121.600l2.100 2.100M70.200 129.900l2.100 2.100M61.900 132l2.100-2.100M70.200 123.700l2.100-2.100" fill="none" stroke="#3c4043" stroke-width="3.2" /></svg>
<svg class="b" style="left:369px;top:103px;overflow:visible;" width="31" height="30" viewBox="369 103 31 30"><rect x="371.4" y="106" width="9" height="9" fill="none" stroke="#3c4043" stroke-width="2.4" /><rect x="371.4" y="121" width="9" height="9" fill="none" stroke="#3c4043" stroke-width="2.4" /><rect x="387.8" y="106" width="9" height="9" fill="none" stroke="#3c4043" stroke-width="2.4" /><rect x="387.8" y="121" width="9" height="9" fill="none" stroke="#3c4043" stroke-width="2.4" /></svg>
<svg class="b" style="left:460px;top:106px;overflow:visible;" width="32" height="24" viewBox="460 106 32 24"><rect x="462" y="108.4" width="27.6" height="20" fill="#ececec"/><path d="M463.1 129v-19.6l12.7 11 12.7-11V129" fill="none" stroke="#ea6d1c" stroke-width="4.2" stroke-linejoin="round"/></svg>
<svg class="b" style="left:3217px;top:105px;overflow:visible;" width="36" height="26" viewBox="3217 105 36 26"><path d="M3220.8 108.4h9.6l3.6 3.6h13.4a1.8 1.8 0 0 1 1.8 1.8v13a1.8 1.8 0 0 1-1.8 1.8h-26.6a1.8 1.8 0 0 1-1.8-1.8v-16.6a1.8 1.8 0 0 1 1.8-1.8z" fill="none" stroke="#3c4043" stroke-width="2.6" stroke-linejoin="round"/></svg>
<svg class="b" style="left:50px;top:205px;overflow:visible;" width="32" height="26" viewBox="50 205 32 26"><path d="M52.3 208.8H79.7" fill="none" stroke="#1e2024" stroke-width="3" stroke-linecap="round"/><path d="M52.3 218.5H79.7" fill="none" stroke="#1e2024" stroke-width="3" stroke-linecap="round"/><path d="M52.3 228.3H79.7" fill="none" stroke="#1e2024" stroke-width="3" stroke-linecap="round"/></svg>
<svg class="b" style="left:386.6px;top:211.9px;overflow:visible;" width="22.2" height="14.9" viewBox="386.6 211.9 22.2 14.9"><path d="M389.6 214.9L397.7 223.8L405.8 214.9" fill="none" stroke="#1e2024" stroke-width="2.6" /></svg>
<svg class="b" style="left:592.6px;top:211.9px;overflow:visible;" width="22.1" height="14.9" viewBox="592.6 211.9 22.1 14.9"><path d="M595.6 214.9L603.65 223.8L611.7 214.9" fill="none" stroke="#1e2024" stroke-width="2.6" /></svg>
<svg class="b" style="left:775.6px;top:211.9px;overflow:visible;" width="22.1" height="14.9" viewBox="775.6 211.9 22.1 14.9"><path d="M778.6 214.9L786.65 223.8L794.7 214.9" fill="none" stroke="#1e2024" stroke-width="2.6" /></svg>
<svg class="b" style="left:1378.5px;top:202.2px;overflow:visible;" width="32.9" height="31.8" viewBox="1378.5 202.2 32.9 31.8"><circle cx="1392.5" cy="216.2" r="10.6" fill="none" stroke="#4a4f5a" stroke-width="2.8" /><path d="M1400.24 223.439L1408.96 231.59" fill="none" stroke="#4a4f5a" stroke-width="3.0" /></svg>
<svg class="b" style="left:2097px;top:205px;overflow:visible;" width="22" height="22" viewBox="2097 205 22 22"><path d="M2099.6 208l17.6 17.4M2117.2 208l-17.6 17.4" fill="none" stroke="#1e2024" stroke-width="2.7" /></svg>
<svg class="b" style="left:46px;top:324.4px;" width="40" height="40" viewBox="0 0 24 24"><path fill="#3b3e45" d="M12 5.69l5 4.5V18h-2v-6H9v6H7v-7.81l5-4.5M12 3L2 12h3v8h6v-6h2v6h6v-8h3L12 3z"/></svg>
<svg class="b" style="left:46px;top:404.4px;" width="40" height="40" viewBox="0 0 24 24"><path fill="#3b3e45" d="M12 2l-5.5 9h11L12 2zm0 3.84L13.93 9h-3.87L12 5.84zM17.5 13c-2.49 0-4.5 2.01-4.5 4.5s2.01 4.5 4.5 4.5 4.500-2.01 4.500-4.500-2.010-4.500-4.500-4.500zm0 7c-1.380 0-2.500-1.120-2.500-2.500s1.120-2.500 2.500-2.500 2.500 1.120 2.500 2.500-1.120 2.500-2.500 2.500zM3 21.500h8v-8H3v8zm2-6h4v4H5v-4z"/></svg>
<svg class="b" style="left:48px;top:488px;overflow:visible;" width="33" height="31" viewBox="48 488 33 31"><path d="M64.4 489.3v4.6M48.9 502.3h5.2M54 491.6l3.4 3.4M75.3 492.6l-3.7 3.6M53.9 512l3.6-3.6" fill="none" stroke="#3b3e45" stroke-width="3" /><path d="M61.2 499.4L76.8 504.2L71.6 507L79.1 514.2L76 517.1L68.6 509.8L66 514.8Z" fill="#3b3e45"/></svg>
<svg class="b" style="left:50px;top:568px;overflow:visible;" width="34" height="34" viewBox="50 568 34 34"><path d="M71 577.8Q73.645 586.655 82.5 589.3Q73.645 591.945 71 600.8Q68.355 591.945 59.5 589.3Q68.355 586.655 71 577.8ZM56.3 574.2Q57.795 579.205 62.8 580.7Q57.795 582.195 56.3 587.2Q54.805 582.195 49.8 580.7Q54.805 579.205 56.3 574.2ZM64.4 568.2Q65.32 571.28 68.4 572.2Q65.32 573.12 64.4 576.2Q63.48 573.12 60.4 572.2Q63.48 571.28 64.4 568.2Z" fill="#3b3e45"/></svg>
<svg class="b" style="left:49px;top:647px;overflow:visible;" width="35" height="35" viewBox="49 647 35 35"><circle cx="66.2" cy="664" r="16.8" fill="#1e61f0"/><path d="M54 663.9H78.4" fill="none" stroke="#ffffff" stroke-width="1.7" stroke-linecap="round"/><path d="M57.1 669.6C60.5 662 62.5 653 65.2 653C68 653 69 674.2 72.2 674.2C74 674.2 75.3 670 76.7 666" fill="none" stroke="#ffffff" stroke-width="1.9" stroke-linecap="round"/></svg>
<svg class="b" style="left:49px;top:745px;overflow:visible;" width="35" height="34" viewBox="49 745 35 34"><rect x="51.5" y="748.2" width="29.2" height="27.4" rx="2.6" fill="none" stroke="#3b3e45" stroke-width="2.8" /><path d="M59.3 757.7V770M65.9 753.7V770M72.7 763.4V770" fill="none" stroke="#3b3e45" stroke-width="2.9" /></svg>
<svg class="b" style="left:48px;top:826px;overflow:visible;" width="36" height="32" viewBox="48 826 36 32"><rect x="50.3" y="828.5" width="31.2" height="20.8" rx="2.4" fill="none" stroke="#3b3e45" stroke-width="2.8" /><path d="M65.9 849.3V855.6M60 855.6H71.8" fill="none" stroke="#3b3e45" stroke-width="2.7" /></svg>
<svg class="b" style="left:49px;top:903px;overflow:visible;" width="34" height="37" viewBox="49 903 34 37"><rect x="67.3" y="905" width="8.2" height="6.3" fill="none" stroke="#3b3e45" stroke-width="2.4" /><rect x="67.3" y="918.6" width="8.2" height="6.3" fill="none" stroke="#3b3e45" stroke-width="2.4" /><rect x="67.3" y="931.7" width="8.2" height="6.3" fill="none" stroke="#3b3e45" stroke-width="2.4" /><rect x="51.3" y="918.6" width="8.2" height="6.3" fill="none" stroke="#3b3e45" stroke-width="2.4" /><path d="M60.7 921.7H66.1M76.7 921.7H82.1M76.7 908.2H82.1M76.7 934.8H82.1M71.4 912.5V917.4M71.4 926.1V930.5" fill="none" stroke="#3b3e45" stroke-width="2.4" /></svg>
<svg class="b" style="left:47px;top:988px;overflow:visible;" width="40" height="29" viewBox="47 988 40 29"><circle cx="61.2" cy="995.6" r="4.9" fill="none" stroke="#3b3e45" stroke-width="2.6" /><path d="M49.1 1014.2c0-7 5.6-10.700 12.100-10.700s12.100 3.700 12.100 10.700z" fill="none" stroke="#3b3e45" stroke-width="2.6" stroke-linejoin="round"/><path d="M69.800 989.700A6.300 6.300 0 0 1 69.800 1001.500A10 10 0 0 0 69.800 989.700Z" fill="#3b3e45"/><path d="M73.500 1004.400c6 0.800 11.700 4.500 11.700 11.100h-8.400c0-4.600-1.300-8.300-3.300-11.100z" fill="#3b3e45"/></svg>
<svg class="b" style="left:48px;top:1064px;overflow:visible;" width="36" height="36" viewBox="48 1064 36 36"><path d="M65.800 1066.500a15.500 15.500 0 0 1 0 31" fill="none" stroke="#3b3e45" stroke-width="2.6" /><path d="M65.800 1097.500a15.500 15.500 0 0 1 0-31" fill="none" stroke="#3b3e45" stroke-width="2.6" stroke-dasharray="6.400 3.340" stroke-dashoffset="-1.670"/><path d="M62 1075.800L72.600 1082.200L62 1088.600Z" fill="#3b3e45"/></svg>
<svg class="b" style="left:45.5px;top:1141.5px;" width="41" height="41" viewBox="0 0 24 24"><path fill="#3b3e45" d="M16,6l-0.440,0.550C14.380,8.020,12,7.190,12,5.300V2c0,0-8,4-8,11c0,4.420,3.580,8,8,8s8-3.580,8-8C20,10.040,18.390,7.380,16,6z M12,19 c-1.100,0-2-0.870-2-1.940c0-0.510,0.200-0.990,0.580-1.360L12,14.300l1.430,1.400C13.800,16.070,14,16.550,14,17.060C14,18.130,13.100,19,12,19z M15.960,17.500 L15.960,17.500c0.040-0.360,0.220-1.890-1.130-3.220l0,0L12,11.500l-2.830,2.780l0,0c-1.360,1.340-1.170,2.880-1.130,3.220C6.790,16.400,6,14.790,6,13 c0-3.160,2.130-5.650,4.030-7.250c0.230,1.990,1.930,3.550,3.990,3.550c0.780,0,1.540-0.230,2.180-0.660C17.340,9.780,18,11.350,18,13 C18,14.790,17.210,16.400,15.960,17.500z"/></svg>
<svg class="b" style="left:49px;top:1227px;overflow:visible;" width="34" height="31" viewBox="49 1227 34 31"><path d="M58.800 1230.400H73.600" fill="none" stroke="#3b3e45" stroke-width="2.8" /><path d="M63.200 1230.400V1239L52.700 1251.900A1.500 1.500 0 0 0 53.900 1254.400H78.300A1.500 1.500 0 0 0 79.500 1251.900L69 1239V1230.400" fill="none" stroke="#3b3e45" stroke-width="2.8" stroke-linejoin="round"/></svg>
<svg class="b" style="left:48px;top:1304px;overflow:visible;" width="36" height="36" viewBox="48 1304 36 36"><circle cx="66.100" cy="1322" r="15.300" fill="none" stroke="#3b3e45" stroke-width="2.7" /><path d="M73.600 1314.600L69.500 1325.400L58.600 1329.400L62.700 1318.600Z M66.100 1320.200a1.800 1.800 0 1 0 0.010 0Z" fill="#3b3e45" fill-rule="evenodd"/></svg>
<svg class="b" style="left:50px;top:1403px;overflow:visible;" width="33" height="34" viewBox="50 1403 33 34"><ellipse cx="66" cy="1410.600" rx="13.700" ry="5.200" fill="none" stroke="#1e61f0" stroke-width="2.8" /><path d="M52.300 1410.600V1429.200A13.700 5.200 0 0 0 79.700 1429.200V1410.600M52.300 1419.900A13.700 5.200 0 0 0 79.700 1419.900" fill="none" stroke="#1e61f0" stroke-width="2.8" /></svg>
<svg class="b" style="left:48px;top:1482px;overflow:visible;" width="36" height="36" viewBox="48 1482 36 36"><path d="M49.800 1500.400H55.500L61.200 1514.800L68.200 1485.200L73.400 1505.800L78 1493L80.300 1500.400H82.600" fill="none" stroke="#3b3e45" stroke-width="2.8" stroke-linejoin="round"/></svg>
<svg class="b" style="left:50px;top:1564px;overflow:visible;" width="33" height="33" viewBox="50 1564 33 33"><rect x="52.800" y="1566.600" width="26.900" height="27" fill="none" stroke="#3b3e45" stroke-width="2.8" stroke-dasharray="2.800 3.225"/><rect x="59.600" y="1573.900" width="13.200" height="12.700" fill="none" stroke="#3b3e45" stroke-width="2.8" /></svg>
<svg class="b" style="left:53px;top:1645px;overflow:visible;" width="28" height="33" viewBox="53 1645 28 33"><circle cx="57.400" cy="1649.800" r="3.300" fill="#3b3e45"/><path d="M57.400 1649.800H71.500A5.300 5.300 0 0 1 71.500 1660.400H61.800A4.900 4.900 0 0 0 61.800 1670.200H73.500" fill="none" stroke="#3b3e45" stroke-width="3.1" /><path d="M72.600 1664L79.600 1670.200L72.600 1676.400Z" fill="#3b3e45"/></svg>
<svg class="b" style="left:165px;top:527px;overflow:visible;" width="31" height="36" viewBox="165 527 31 36"><circle cx="171.300" cy="533.400" r="3.800" fill="none" stroke="#5a5e68" stroke-width="2.8" /><circle cx="171.300" cy="556.200" r="3.800" fill="none" stroke="#5a5e68" stroke-width="2.8" /><circle cx="189.300" cy="537.100" r="3.800" fill="none" stroke="#5a5e68" stroke-width="2.8" /><path d="M171.300 538.600V551M189.300 542.300V545.700L172.500 550.600" fill="none" stroke="#5a5e68" stroke-width="2.8" stroke-linejoin="round"/></svg>
<svg class="b" style="left:434.6px;top:441.6px;overflow:visible;" width="23.7" height="14.6" viewBox="434.6 441.6 23.7 14.6"><path d="M437.6 444.6L446.45 453.2L455.3 444.6" fill="none" stroke="#1e2024" stroke-width="2.6" /></svg>
<svg class="b" style="left:438.3px;top:537.5px;overflow:visible;" width="23.7" height="14.6" viewBox="438.3 537.5 23.7 14.6"><path d="M441.3 540.5L450.15 549.1L459 540.5" fill="none" stroke="#1e2024" stroke-width="2.6" /></svg>
<svg class="b" style="left:788.5px;top:331.6px;overflow:visible;" width="36.8" height="36.8" viewBox="788.5 331.6 36.8 36.8"><circle cx="806.9" cy="350" r="15.15" fill="none" stroke="#5a5e68" stroke-width="2.5" /><path d="M806.9 348.032V358.2" fill="none" stroke="#5a5e68" stroke-width="2.5" /><circle cx="806.9" cy="342.62" r="1.55" fill="#5a5e68"/></svg>
<svg class="b" style="left:1150px;top:577px;overflow:visible;" width="26" height="23" viewBox="1150 577 26 23"><path d="M1152.200 589.200L1158.800 596L1172.600 580.600" fill="none" stroke="#1e2024" stroke-width="2.7" /></svg>
<svg class="b" style="left:583.2px;top:677.3px;overflow:visible;" width="32" height="31.4" viewBox="583.2 677.3 32 31.4"><circle cx="596.7" cy="690.8" r="10.1" fill="none" stroke="#868b94" stroke-width="2.8" /><path d="M603.973 697.808L612.768 706.284" fill="none" stroke="#868b94" stroke-width="3.0" /></svg>
<svg class="b" style="left:1556.3px;top:684.4px;overflow:visible;" width="22.7" height="14.9" viewBox="1556.3 684.4 22.7 14.9"><path d="M1559.3 687.4L1567.65 696.3L1576 687.4" fill="none" stroke="#1e2024" stroke-width="2.6" /></svg>
<svg class="b" style="left:726px;top:782px;overflow:visible;" width="32" height="25" viewBox="726 782 32 25"><circle cx="745.300" cy="794.100" r="9.900" fill="none" stroke="#1e61f0" stroke-width="2.4" /><path d="M732.600 784.500A15.900 15.900 0 0 0 732.600 803.700" fill="none" stroke="#1e61f0" stroke-width="2.4" /></svg>
<svg class="b" style="left:671px;top:868px;overflow:visible;" width="14" height="20" viewBox="671 868 14 20"><path d="M673.800 870.900L681.200 878.200L673.800 885.500" fill="none" stroke="#1e2024" stroke-width="2.7" /></svg>
<svg class="b" style="left:1413.5px;top:862.9px;overflow:visible;" width="31" height="31" viewBox="1413.5 862.9 31 31"><circle cx="1429" cy="878.4" r="12.3" fill="none" stroke="#1e2024" stroke-width="2.4" /><path d="M1429 876.78V885.15" fill="none" stroke="#1e2024" stroke-width="2.4" /><circle cx="1429" cy="872.325" r="1.488" fill="#1e2024"/></svg>
<svg class="b" style="left:1778.5px;top:862.9px;overflow:visible;" width="31" height="31" viewBox="1778.5 862.9 31 31"><circle cx="1794" cy="878.4" r="12.3" fill="none" stroke="#1e2024" stroke-width="2.4" /><path d="M1794 876.78V885.15" fill="none" stroke="#1e2024" stroke-width="2.4" /><circle cx="1794" cy="872.325" r="1.488" fill="#1e2024"/></svg>
<svg class="b" style="left:2220px;top:230px;overflow:visible;" width="36" height="36" viewBox="2220 230 36 36"><path d="M2242.6 240.9Q2245.34 250.063 2254.5 252.8Q2245.34 255.537 2242.6 264.7Q2239.86 255.537 2230.7 252.8Q2239.86 250.063 2242.6 240.9ZM2228 238.6Q2229.45 243.451 2234.3 244.9Q2229.45 246.349 2228 251.2Q2226.55 246.349 2221.7 244.9Q2226.55 243.451 2228 238.6ZM2236.2 231.9Q2237.05 234.749 2239.9 235.6Q2237.05 236.451 2236.2 239.3Q2235.35 236.451 2232.5 235.6Q2235.35 234.749 2236.2 231.9Z" fill="#1e61f0"/></svg>
<svg class="b" style="left:3258px;top:236px;overflow:visible;" width="24" height="24" viewBox="3258 236 24 24"><path d="M3261 257.200A9 7 0 0 1 3279 257.200" fill="none" stroke="#5a5e68" stroke-width="1.8" stroke-linecap="round"/><circle cx="3270" cy="244.900" r="5.700" fill="#f0f1f3" stroke="#5a5e68" stroke-width="1.800"/></svg>
<svg class="b" style="left:3183px;top:311px;overflow:visible;" width="34" height="33" viewBox="3183 311 34 33"><rect x="3185.700" y="314.400" width="28.700" height="26.800" rx="2.400" fill="none" stroke="#1e2024" stroke-width="2.8" /><path d="M3193.600 325.100V335.700M3200 320.200V335.700M3206.700 329.900V335.700" fill="none" stroke="#1e2024" stroke-width="3.4" /></svg>
<svg class="b" style="left:2706px;top:607px;overflow:visible;" width="22.5" height="14.3" viewBox="2706 607 22.5 14.3"><path d="M2709 610L2717.25 618.3L2725.5 610" fill="none" stroke="#1e61f0" stroke-width="2.6" /></svg>
<svg class="b" style="left:2634.7px;top:674.9px;overflow:visible;" width="21.9" height="14" viewBox="2634.7 674.9 21.9 14"><path d="M2637.7 677.9L2645.65 685.9L2653.6 677.9" fill="none" stroke="#1e61f0" stroke-width="2.6" /></svg>
<svg class="b" style="left:2725.8px;top:742.7px;overflow:visible;" width="21.9" height="14" viewBox="2725.8 742.7 21.9 14"><path d="M2728.8 745.7L2736.75 753.7L2744.7 745.7" fill="none" stroke="#1e61f0" stroke-width="2.6" /></svg>
<svg class="b" style="left:2379.1px;top:891.2px;overflow:visible;" width="30" height="30" viewBox="2379.1 891.2 30 30"><circle cx="2394.1" cy="906.2" r="12" fill="none" stroke="#8a8e98" stroke-width="2" /><path d="M2394.1 904.64V912.7" fill="none" stroke="#8a8e98" stroke-width="2" /><circle cx="2394.1" cy="900.35" r="1.24" fill="#8a8e98"/></svg>
<svg class="b" style="left:3197.3px;top:887.1px;overflow:visible;" width="37.4" height="37.4" viewBox="3197.3 887.1 37.4 37.4"><circle cx="3216" cy="905.8" r="15.4" fill="none" stroke="#1e61f0" stroke-width="2.6" /><path d="M3207.7 905.8H3224.3M3216 897.5V914.1" fill="none" stroke="#1e61f0" stroke-width="2.6" /></svg>
<svg class="b" style="left:3174.4px;top:1096.4px;overflow:visible;" width="37.4" height="37.4" viewBox="3174.4 1096.4 37.4 37.4"><circle cx="3193.1" cy="1115.1" r="15.4" fill="none" stroke="#1e61f0" stroke-width="2.6" /><path d="M3184.8 1115.1H3201.4M3193.1 1106.8V1123.4" fill="none" stroke="#1e61f0" stroke-width="2.6" /></svg>
<svg class="b" style="left:2439.4px;top:1107.5px;overflow:visible;" width="22.4" height="15.3" viewBox="2439.4 1107.5 22.4 15.3"><path d="M2442.4 1110.5L2450.6 1119.8L2458.8 1110.5" fill="none" stroke="#1e2024" stroke-width="2.6" /></svg>
<svg class="b" style="left:2368.6px;top:1189.7px;overflow:visible;" width="30.4" height="30.4" viewBox="2368.6 1189.7 30.4 30.4"><circle cx="2383.8" cy="1204.9" r="12.2" fill="none" stroke="#9ea2ab" stroke-width="2" /><path d="M2377.2 1204.9H2390.4M2383.8 1198.3V1211.5" fill="none" stroke="#9ea2ab" stroke-width="2" /></svg>
<svg class="b" style="left:2492px;top:1192px;overflow:visible;" width="25" height="28" viewBox="2492 1192 25 28"><path d="M2492.800 1196.200H2515.300M2499.800 1194.200H2508.300" fill="none" stroke="#1e61f0" stroke-width="2.6" /><path d="M2496.800 1200.200V1215.300A1.500 1.500 0 0 0 2498.300 1216.800H2509.800A1.500 1.500 0 0 0 2511.300 1215.300V1200.200" fill="none" stroke="#1e61f0" stroke-width="2.6" /></svg>
<svg class="b" style="left:2292px;top:1284px;overflow:visible;" width="26" height="20" viewBox="2292 1284 26 20"><path d="M2294 1294.700L2300.900 1301.800L2315.200 1286" fill="none" stroke="#ffffff" stroke-width="2.6" /></svg>
<svg class="b" style="left:2246px;top:1797px;overflow:visible;" width="29" height="29" viewBox="2246 1797 29 29"><circle cx="2260" cy="1806" r="5.800" fill="none" stroke="#1e2024" stroke-width="2.6" /><path d="M2248.200 1823.700C2248.200 1817.700 2253.500 1815.400 2260 1815.400S2271.800 1817.700 2271.800 1823.700Z" fill="none" stroke="#1e2024" stroke-width="2.6" stroke-linejoin="round"/></svg>
<span class="t" style="left:2317.05px;top:1794px;font-size:34.5px;line-height:38px;color:#1e2024;-webkit-text-stroke:0.6px #1e2024;transform:scaleX(0.9027);">B</span>
<svg class="b" style="left:2383px;top:1799px;overflow:visible;" width="26" height="26" viewBox="2383 1799 26 26"><path d="M2392 1801.500H2407.800M2384 1822.800H2399.900M2400.500 1801.500L2391.500 1822.800" fill="none" stroke="#1e2024" stroke-width="2.8" /></svg>
<svg class="b" style="left:2448px;top:1795px;overflow:visible;" width="32" height="33" viewBox="2448 1795 32 33"><rect x="2450.600" y="1798.200" width="26.500" height="26.700" rx="2.600" fill="none" stroke="#1e2024" stroke-width="2.9" /><path d="M2454.800 1804.700H2464.500M2459.300 1811.300H2469M2464 1817.900H2473.800" fill="none" stroke="#1e2024" stroke-width="2.6" /></svg>
<svg class="b" style="left:2516px;top:1795px;overflow:visible;" width="32" height="33" viewBox="2516 1795 32 33"><rect x="2518.700" y="1798.200" width="26.700" height="26.700" rx="2.600" fill="none" stroke="#1e2024" stroke-width="2.9" /><path d="M2523.200 1819.200L2529.200 1813.400L2532.700 1816.600L2536.400 1811.800L2541.600 1819.200Z" fill="#1e2024"/></svg>
<div class="b" style="left:2584.4px;top:1808.9px;width:5.8px;height:5.8px;background:#1e2024;border-radius:3px;"></div>
<div class="b" style="left:2595px;top:1808.9px;width:5.8px;height:5.8px;background:#1e2024;border-radius:3px;"></div>
<div class="b" style="left:2605.5px;top:1808.9px;width:5.8px;height:5.8px;background:#1e2024;border-radius:3px;"></div>
</div>
</body></html>
